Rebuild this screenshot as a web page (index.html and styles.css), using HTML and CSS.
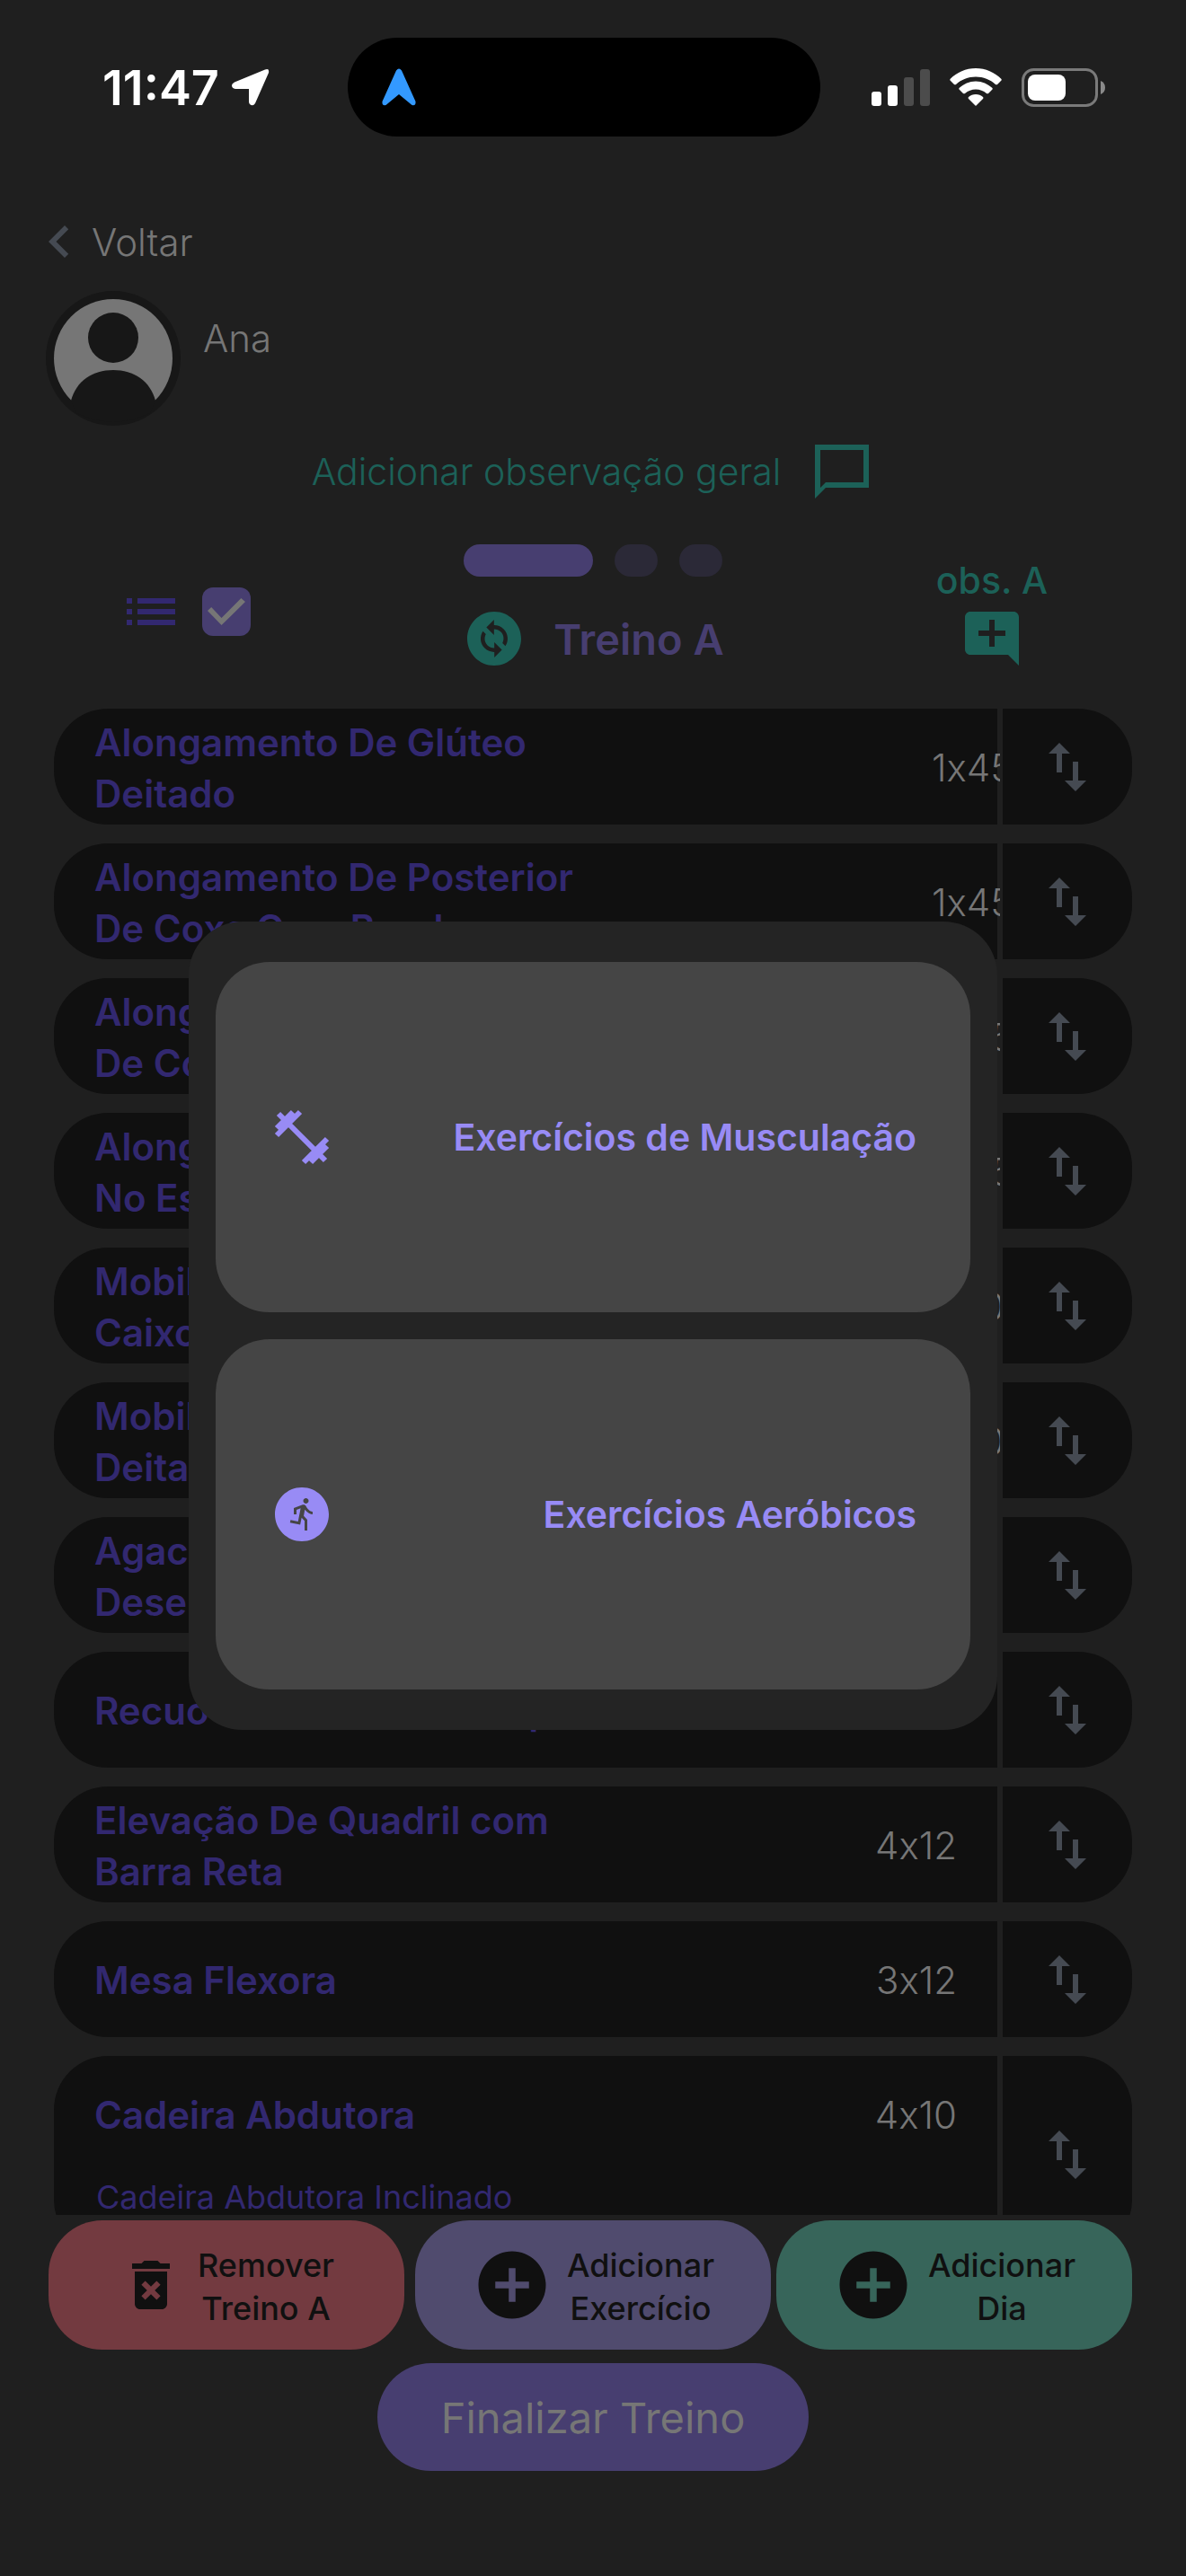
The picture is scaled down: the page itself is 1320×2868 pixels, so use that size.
FILE: index.html
```
<!DOCTYPE html>
<html lang="pt-BR">
<head>
  <meta charset="UTF-8">
  <meta name="viewport" content="width=device-width, initial-scale=1.0">
  <title>Treino A</title>
  <link rel="stylesheet" href="styles.css">
</head>
<body>

  <svg class="simbolos" aria-hidden="true">
    <symbol id="mover" viewBox="0 0 24 24"><path d="M9 3L5 6.99h3V14h2V6.99h3L9 3zm7 14.01V10h-2v7.01h-3L15 21l4-3.99h-3z"/></symbol>
    <symbol id="mais" viewBox="0 0 24 24"><path d="M12 2C6.48 2 2 6.48 2 12s4.48 10 10 10 10-4.48 10-10S17.52 2 12 2zm5 11h-4v4h-2v-4H7v-2h4V7h2v4h4v2z"/></symbol>
  </svg>

  <div class="status">
    <div class="hora">
      <span>11:47</span>
      <svg width="42" height="42" viewBox="0 0 42 42"><path d="M37 1.5Q42-.5 41 5L26 39Q23.500 43 20 40Q19 39 19 37V23H4Q0 22.500 0 19Q0 17 3 15.500Z" fill="#fff"/></svg>
    </div>
    <div class="ilha">
      <svg width="38" height="42" viewBox="0 0 38 42"><path d="M16 2.500Q19-1.500 22 2.500L37.500 37Q38 42 33.500 41L19 29L4.500 41Q0 42 .5 37Z" fill="#3399ff"/></svg>
    </div>
    <div class="sinais">
      <svg width="65" height="42" viewBox="0 0 65 42">
        <rect x="0" y="26" width="11" height="16" rx="3" fill="#fff"/>
        <rect x="18" y="19" width="11" height="23" rx="3" fill="#fff"/>
        <rect x="36" y="10" width="11" height="32" rx="3" fill="#4c4c4c"/>
        <rect x="54" y="1" width="11" height="41" rx="3" fill="#4c4c4c"/>
      </svg>
      <svg width="58" height="42" viewBox="0 0 58 42" fill="#fff">
        <path d="M29 0C40 0 50 4.500 57.500 12Q58 13 57.500 13.500L53 18Q52 18.500 51 18C45 12.500 37.500 9.500 29 9.500S13 12.500 7 18Q6 18.500 5 18L.5 13.500Q0 13 .5 12C8 4.500 18 0 29 0Z"/>
        <path d="M29 14.500C36 14.500 42.500 17.500 47.500 22Q48 23 47.500 23.500L43 28Q42 28.500 41 28C37.500 25 33.500 23.500 29 23.500S20.500 25 17 28Q16 28.500 15 28L10.500 23.500Q10 23 10.500 22C15.500 17.500 22 14.500 29 14.500Z"/>
        <path d="M29 29C32 29 35 30 37 32Q38 33 37 34L29.500 41.500Q29 42 28.500 41.500L21 34Q20 33 21 32C23 30 26 29 29 29Z"/>
      </svg>
      <svg width="93" height="43" viewBox="0 0 93 43">
        <rect x="1.500" y="1.500" width="82" height="40" rx="12" fill="none" stroke="#7a7a7a" stroke-width="3"/>
        <rect x="7" y="7" width="42" height="29" rx="8" fill="#fff"/>
        <path d="M88 14Q93 16 93 21.500T88 29Z" fill="#8a8a8a"/>
      </svg>
    </div>
  </div>

  <a class="voltar" href="#">
    <svg class="icone" viewBox="0 0 24 24"><path d="M15.410 7.410L14 6l-6 6 6 6 1.410-1.410L10.830 12z"/></svg>
    Voltar
  </a>

  <div class="aluno">
    <svg width="150" height="150" viewBox="0 0 150 150">
      <circle cx="75" cy="75" r="75" fill="#171717"/>
      <circle cx="75" cy="75" r="66" fill="#767676"/>
      <circle cx="75" cy="52" r="28" fill="#171717"/>
      <path d="M28 122C34 100 52 88 75 88S116 100 122 122L116 136Q75 155 34 136Z" fill="#171717"/>
    </svg>
    <span>Ana</span>
  </div>

  <button class="obs-geral">
    Adicionar observação geral
    <svg class="icone" viewBox="0 0 24 24"><path d="M2 2v20l4-4h16V2H2zm18 14H6l-2 2V4h16v12z"/></svg>
  </button>

  <div class="barra">
    <div class="modo">
      <svg class="icone" viewBox="0 0 24 24"><path d="M3 13h2v-2H3v2zm0 4h2v-2H3v2zm0-8h2V7H3v2zm4 4h14v-2H7v2zm0 4h14v-2H7v2zM7 7v2h14V7H7z"/></svg>
      <input type="checkbox" aria-label="Mostrar lista" checked>
    </div>
    <div class="dia">
      <div class="paginas">
        <i class="atual"></i><i></i><i></i>
      </div>
      <h1>
        <svg class="icone" viewBox="0 0 24 24"><path d="M12 2C6.480 2 2 6.480 2 12s4.480 10 10 10 10-4.480 10-10S17.520 2 12 2zm.06 17v-2.010H12c-1.280 0-2.560-.49-3.540-1.460-1.710-1.710-1.920-4.350-.64-6.290l1.100 1.100c-.71 1.330-.53 3.010.59 4.130.7.7 1.620 1.030 2.540 1.010v-2.140l2.830 2.830L12.060 19zm4.110-4.240l-1.100-1.100c.71-1.330.53-3.010-.59-4.130C13.790 8.840 12.900 8.500 12 8.500h-.06v2.150L9.110 7.830 11.940 5v2.020c1.300-.02 2.610.45 3.600 1.450 1.700 1.700 1.910 4.350.63 6.290z"/></svg>
        Treino A
      </h1>
    </div>
    <button class="obs-dia">
      obs. A
      <svg class="icone" viewBox="0 0 24 24"><path d="M22 4c0-1.100-.9-2-2-2H4c-1.100 0-2 .9-2 2v12c0 1.100.9 2 2 2h14l4 4V4zm-5 7h-4v4h-2v-4H7V9h4V5h2v4h4v2z"/></svg>
    </button>
  </div>

  <ul class="lista">
    <li>
      <div class="exercicio"><div class="linha"><span class="nome">Alongamento De Glúteo Deitado</span><span class="series longa">1x45s</span></div></div>
      <button class="mover" aria-label="Mover"><svg class="icone"><use href="#mover"/></svg></button>
    </li>
    <li>
      <div class="exercicio"><div class="linha"><span class="nome">Alongamento De Posterior De Coxa Com Banda</span><span class="series longa">1x45s</span></div></div>
      <button class="mover" aria-label="Mover"><svg class="icone"><use href="#mover"/></svg></button>
    </li>
    <li>
      <div class="exercicio"><div class="linha"><span class="nome">Alongamento De Anterior De Coxa</span><span class="series longa">1x45s</span></div></div>
      <button class="mover" aria-label="Mover"><svg class="icone"><use href="#mover"/></svg></button>
    </li>
    <li>
      <div class="exercicio"><div class="linha"><span class="nome">Alongamento De Posterior No Espaldar</span><span class="series longa">1x45s</span></div></div>
      <button class="mover" aria-label="Mover"><svg class="icone"><use href="#mover"/></svg></button>
    </li>
    <li>
      <div class="exercicio"><div class="linha"><span class="nome">Mobilidade De Quadril Caixote</span><span class="series longa">1x10</span></div></div>
      <button class="mover" aria-label="Mover"><svg class="icone"><use href="#mover"/></svg></button>
    </li>
    <li>
      <div class="exercicio"><div class="linha"><span class="nome">Mobilidade De Torácica Deitado</span><span class="series longa">1x10</span></div></div>
      <button class="mover" aria-label="Mover"><svg class="icone"><use href="#mover"/></svg></button>
    </li>
    <li>
      <div class="exercicio"><div class="linha"><span class="nome">Agachamento Com Desenvolvimento</span><span class="series">3x12</span></div></div>
      <button class="mover" aria-label="Mover"><svg class="icone"><use href="#mover"/></svg></button>
    </li>
    <li>
      <div class="exercicio"><div class="linha"><span class="nome">Recuo Alternado No Step</span><span class="series">3x12</span></div></div>
      <button class="mover" aria-label="Mover"><svg class="icone"><use href="#mover"/></svg></button>
    </li>
    <li>
      <div class="exercicio"><div class="linha"><span class="nome">Elevação De Quadril com Barra Reta</span><span class="series">4x12</span></div></div>
      <button class="mover" aria-label="Mover"><svg class="icone"><use href="#mover"/></svg></button>
    </li>
    <li>
      <div class="exercicio"><div class="linha"><span class="nome">Mesa Flexora</span><span class="series">3x12</span></div></div>
      <button class="mover" aria-label="Mover"><svg class="icone"><use href="#mover"/></svg></button>
    </li>
    <li>
      <div class="exercicio">
        <div class="linha"><span class="nome">Cadeira Abdutora</span><span class="series">4x10</span></div>
        <p class="detalhe">Cadeira Abdutora Inclinado</p>
      </div>
      <button class="mover" aria-label="Mover"><svg class="icone"><use href="#mover"/></svg></button>
    </li>
  </ul>

  <div class="acoes">
    <button class="remover">
      <svg class="icone" viewBox="0 0 24 24"><path d="M6 19c0 1.100.9 2 2 2h8c1.100 0 2-.9 2-2V7H6v12zm2.460-7.120l1.410-1.410L12 12.590l2.120-2.120 1.410 1.410L13.410 14l2.120 2.120-1.410 1.410L12 15.410l-2.120 2.120-1.410-1.410L10.590 14l-2.130-2.120zM15.500 4l-1-1h-5l-1 1H5v2h14V4z"/></svg>
      <span>Remover<br>Treino A</span>
    </button>
    <button class="add-exercicio">
      <svg class="icone grande"><use href="#mais"/></svg>
      <span>Adicionar<br>Exercício</span>
    </button>
    <button class="add-dia">
      <svg class="icone grande"><use href="#mais"/></svg>
      <span>Adicionar<br>Dia</span>
    </button>
  </div>

  <button class="finalizar">Finalizar Treino</button>

  <div class="fundo">
    <div class="modal" role="dialog" aria-modal="true" aria-label="Adicionar exercício">
      <button>
        <svg class="icone" viewBox="0 0 72 72"><path d="M10 10L62 62M26 8L8 26M34 8L8 34M46 64L64 46M38 64L64 38" fill="none" stroke="currentColor" stroke-width="6"/></svg>
        Exercícios de Musculação
      </button>
      <button>
        <svg class="icone" viewBox="0 0 24 24"><path d="M12 2C6.480 2 2 6.480 2 12s4.480 10 10 10 10-4.480 10-10S17.520 2 12 2zm1.500 4c.55 0 1 .45 1 1s-.45 1-1 1-1-.45-1-1 .45-1 1-1zm2.500 6c-.7 0-2.010-.54-2.910-1.760l-.41 2.350L14 14.030V18h-1v-3.580l-1.110-1.210-.52 2.640-3.770-.77.2-.98 2.780.57.96-4.890-1.540.57V12h-1V9.650l3.280-1.210c.49-.18 1.030.06 1.260.53.82 1.640 2.040 2.030 2.440 2.030v1z"/></svg>
        Exercícios Aeróbicos
      </button>
    </div>
  </div>

</body>
</html>
```
FILE: styles.css
```
* {
  box-sizing: border-box;
}
body {
  margin: 0;
  height: 100vh;
  display: flex;
  flex-direction: column;
  overflow: hidden;
  background: #1f1f1f;
  color: #767676;
  font-family: Inter, "Open Sans", sans-serif;
  font-size: 42px;
  font-weight: 300;
  line-height: 57px;
}
button {
  padding: 0;
  border: none;
  background: none;
  color: inherit;
  font: inherit;
  cursor: pointer;
}
svg {
  flex: none;
  display: block;
}
.simbolos {
  position: absolute;
  width: 0;
  height: 0;
}
.icone {
  width: 72px;
  height: 72px;
  fill: currentColor;
}
.grande {
  width: 90px;
  height: 90px;
}

/* barra do sistema */
.status {
  display: flex;
  align-items: center;
  margin: 42px 90px 81px 114px;
  color: #fff;
}
.hora {
  display: flex;
  align-items: center;
  gap: 14px;
  width: 273px;
  font-size: 54px;
  font-weight: 600;
}
.ilha {
  display: flex;
  align-items: center;
  width: 526px;
  height: 110px;
  padding-left: 38px;
  border-radius: 55px;
  background: #000;
}
.sinais {
  display: flex;
  align-items: center;
  gap: 22px;
  margin-left: auto;
}

/* topo */
.voltar {
  display: flex;
  align-items: center;
  align-self: flex-start;
  margin-left: 30px;
  color: inherit;
  text-decoration: none;
}
.voltar .icone {
  color: #454a52;
}
.aluno {
  display: flex;
  gap: 25px;
  margin: 19px 51px 15px;
}
.aluno span {
  padding-top: 24px;
}
.obs-geral {
  display: flex;
  align-items: center;
  align-self: center;
  gap: 32px;
  color: #1c6158;
  font-size: 41px;
}
.barra {
  display: grid;
  grid-template-columns: 1fr auto 1fr;
  align-items: end;
  margin: 45px 132px 42px;
}
.modo {
  display: flex;
  align-items: center;
  gap: 21px;
  padding-bottom: 30px;
  color: #322870;
}
.modo input {
  appearance: none;
  display: grid;
  place-items: center;
  width: 54px;
  height: 54px;
  margin: 0;
  border-radius: 12px;
  background: #473e70;
}
.modo input:checked::before {
  content: "";
  width: 42px;
  height: 30px;
  background: #767676;
  clip-path: polygon(0 47%, 10% 33%, 37% 73%, 89% 0, 100% 13%, 37% 100%);
}
.paginas {
  display: flex;
  justify-content: center;
  gap: 24px;
  margin-bottom: 33px;
}
.paginas i {
  width: 48px;
  height: 36px;
  border-radius: 18px;
  background: #2b2937;
}
.paginas .atual {
  width: 144px;
  background: #473e70;
}
h1 {
  display: flex;
  align-items: center;
  gap: 30px;
  margin: 0;
  color: #473e70;
  font-size: 47px;
  font-weight: 600;
}
h1 .icone {
  color: #1c6158;
}
.obs-dia {
  display: flex;
  flex-direction: column;
  align-items: center;
  justify-self: end;
  margin-right: 22px;
  color: #1c6158;
  font-size: 41px;
  font-weight: 500;
}

/* lista de exercicios */
.lista {
  flex: 1;
  min-height: 0;
  display: flex;
  flex-direction: column;
  gap: 21px;
  margin: 0 60px;
  padding: 0;
  overflow: hidden;
  list-style: none;
}
.lista li {
  flex: none;
  display: grid;
  grid-template-columns: 1fr 144px;
  gap: 6px;
}
.exercicio {
  padding: 0 45px;
  border-radius: 60px 0 0 60px;
  background: #101010;
  overflow: clip;
  overflow-clip-margin: 3px;
}
.linha {
  display: flex;
  align-items: center;
  justify-content: space-between;
  height: 129px;
  padding-top: 2px;
}
.nome {
  width: 570px;
  color: #322870;
  font-weight: 600;
}
/* sem "calt" o x nao vira sinal de vezes */
.series {
  white-space: nowrap;
  font-feature-settings: "calt" 0;
}
.longa {
  width: 28px;
}
.detalhe {
  margin: 0;
  padding: 0 0 34px 2px;
  color: #322870;
  font-size: 36px;
  font-weight: 400;
}
.mover {
  display: grid;
  place-items: center;
  border-radius: 0 60px 60px 0;
  background: #101010;
  color: #454a52;
}

/* rodape */
.acoes {
  display: flex;
  gap: 6px;
  margin: 6px 60px 15px 54px;
}
.acoes button {
  flex: 1;
  display: flex;
  align-items: center;
  justify-content: center;
  gap: 16px;
  height: 144px;
  border-radius: 60px;
  color: #101010;
  font-size: 36px;
  font-weight: 500;
  line-height: 48px;
}
.acoes span {
  padding-top: 3px;
}
.acoes .remover {
  margin-right: 6px;
  background: #733a40;
}
.acoes .add-exercicio {
  background: #504b6e;
}
.acoes .add-dia {
  background: #37655a;
}
.finalizar {
  align-self: center;
  width: 480px;
  height: 120px;
  margin-bottom: 117px;
  border-radius: 60px;
  background: #473e70;
  font-size: 47px;
  font-weight: 400;
}

/* modal */
.fundo {
  position: fixed;
  inset: 0;
  display: grid;
  align-items: center;
  padding: 84px 210px 0;
}
.modal {
  display: grid;
  gap: 30px;
  padding: 45px 30px;
  border-radius: 60px;
  background: #242424;
}
.modal button {
  display: flex;
  align-items: center;
  justify-content: space-between;
  height: 390px;
  padding: 0 60px;
  border-radius: 60px;
  background: #454545;
  color: #988bf5;
  font-size: 41px;
  font-weight: 600;
}
```
